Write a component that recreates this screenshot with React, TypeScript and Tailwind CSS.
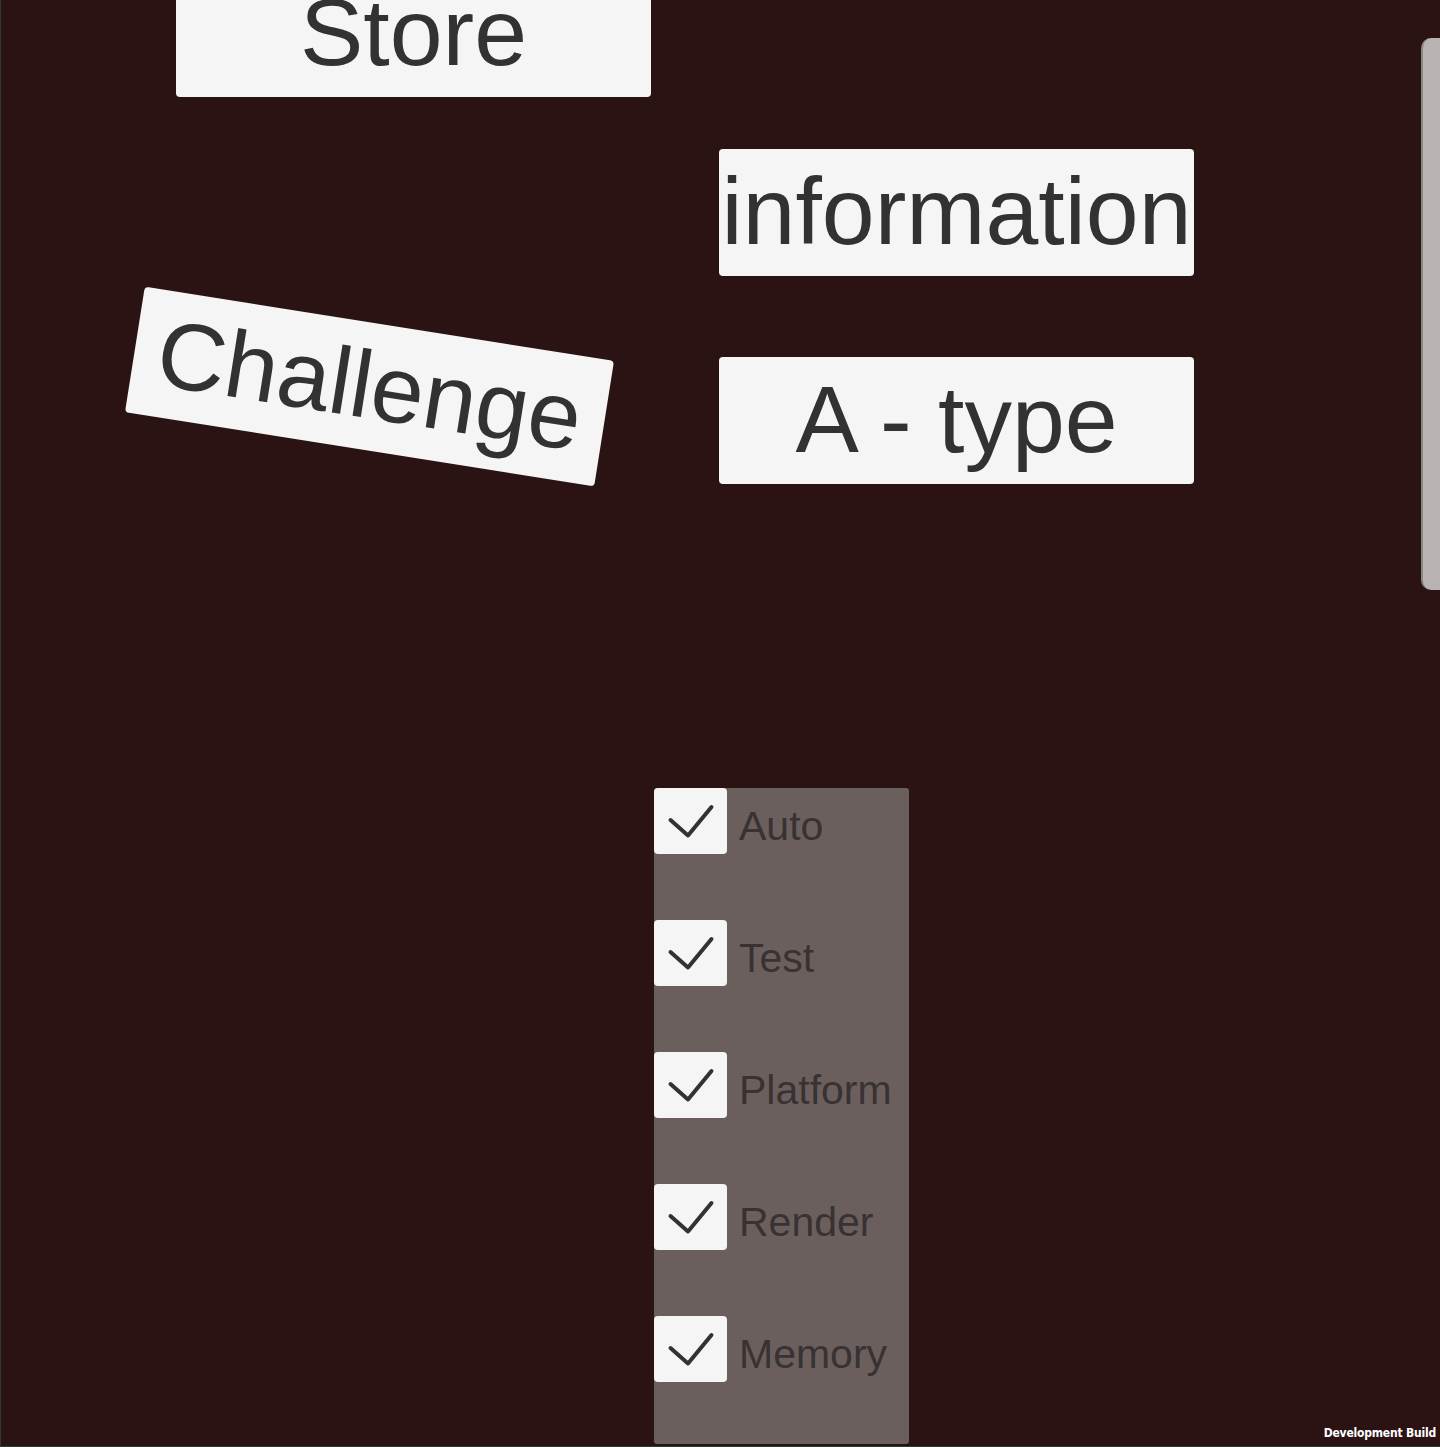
import React from "react";

// --- Types ---
interface CanvasButton {
    label: string;
    className: string;
}

const buttons: CanvasButton[] = [
    { label: "Store", className: "left-[175px] top-[-30px]" },
    { label: "information", className: "left-[718px] top-[149px]" },
    { label: "Challenge", className: "left-[131px] top-[323px] rotate-[9deg]" },
    { label: "A - type", className: "left-[718px] top-[357px]" },
];

const toggles = ["Auto", "Test", "Platform", "Render", "Memory"];

const Check: React.FC = () => (
    <svg width="73" height="66" viewBox="0 0 73 66" fill="none">
        <path
            d="M16.5 32 L34 47.5 L57.5 19"
            stroke="#323232"
            strokeWidth="4"
            strokeLinecap="round"
            strokeLinejoin="round"
        />
    </svg>
);

const App: React.FC = () => {
    return (
        <div
            className="relative w-[1440px] h-[1447px] overflow-hidden bg-[#2b1314] border-l border-b border-[#2f3a30]"
            style={{ fontFamily: '"Liberation Sans", Arial, sans-serif' }}
        >
            {/* Canvas buttons */}
            {buttons.map((b) => (
                <button
                    key={b.label}
                    className={`absolute w-[475px] h-[127px] rounded-[4px] bg-[#f5f5f5] text-[#323232] text-[95px] leading-none flex items-center justify-center whitespace-nowrap overflow-visible ${b.className}`}
                >
                    <span className="block pb-[2px]">{b.label}</span>
                </button>
            ))}

            {/* Debug toggles panel */}
            <div className="absolute left-[653px] top-[788px] w-[255px] h-[656px] rounded-[3px] bg-[#6b5f5e] flex flex-col gap-[66px]">
                {toggles.map((t) => (
                    <label key={t} className="flex items-start gap-[12px] h-[66px]">
                        <span className="w-[73px] h-[66px] shrink-0 rounded-[4px] bg-[#f5f5f5] flex items-center justify-center">
                            <Check />
                        </span>
                        <span className="mt-[18px] text-[41px] leading-none text-[#383232] whitespace-nowrap">
                            {t}
                        </span>
                    </label>
                ))}
            </div>

            {/* Scrollbar handle */}
            <div className="absolute left-[1420px] top-[38px] w-[24px] h-[552px] rounded-l-[10px] bg-[#b8b3b2] border-l-2 border-[#8c8786]" />

            {/* Build tag */}
            <div className="absolute right-[4px] bottom-[7px] text-[12px] font-bold leading-none text-white tracking-[-0.2px]"
                style={{ fontFamily: '"DejaVu Sans Condensed", "Liberation Sans", sans-serif' }}
            >
                Development Build
            </div>
        </div>
    );
};

export default App;
